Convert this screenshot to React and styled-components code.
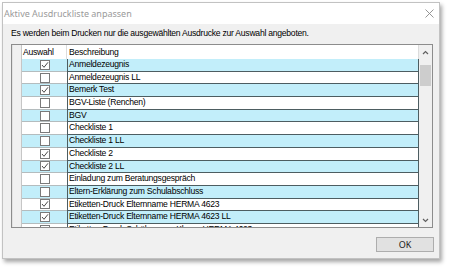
import React from 'react';
import styled, { createGlobalStyle } from 'styled-components';

const Global = createGlobalStyle`
  html, body { margin: 0; padding: 0; background: #ffffff; }
  body { width: 449px; height: 268px; overflow: hidden; }
`;

const Dialog = styled.div`
  margin: 2px 0 0 2px;
  width: 438px;
  height: 257px;
  box-sizing: border-box;
  border: 1px solid #c2c2c2;
  box-shadow: 2px 3px 4px rgba(0, 0, 0, 0.35);
  background: #f0f0f0;
  display: flex;
  flex-direction: column;
`;

const TitleBar = styled.div`
  height: 21px;
  flex: none;
  background: #ffffff;
  display: flex;
  align-items: center;
  justify-content: space-between;
  padding: 0 5px 0 1px;
  font-family: "Noto Sans", sans-serif;
  font-size: 9px;
  color: #9a9a9a;
`;

const Body = styled.div`
  flex: 1;
  display: flex;
  flex-direction: column;
  padding: 4px 5px 0 8px;
  font-family: "Liberation Sans", Arial, sans-serif;
  font-size: 8.6px;
  letter-spacing: -0.25px;
  color: #000;
`;

const Hint = styled.div`
  height: 11px;
  line-height: 11px;
  white-space: nowrap;
`;

const List = styled.div`
  margin-top: 5px;
  width: 422px;
  height: 184px;
  box-sizing: border-box;
  border: 1px solid #8c8c8c;
  background: #ffffff;
  display: flex;
  overflow: hidden;
`;

const Grid = styled.div`
  width: 407px;
  display: flex;
  flex-direction: column;
  overflow: hidden;
`;

const HeaderRow = styled.div`
  height: 14px;
  flex: none;
  display: flex;
  background: #ffffff;
`;

const Row = styled.div`
  height: 12.7px;
  flex: none;
  display: flex;
  background: ${p => (p.$alt ? '#c2eefa' : '#ffffff')};
`;

const Gutter = styled.div`
  width: 10px;
  flex: none;
  box-sizing: border-box;
  background: #f0f0f0;
  border-left: 1px solid #e2e2e2;
  border-right: 1px solid #c6c6c6;
`;

const HeadCell = styled.div`
  width: ${p => p.$w}px;
  flex: none;
  box-sizing: border-box;
  padding-left: ${p => p.$pad}px;
  line-height: 14px;
  border-right: 1px solid #dcdcdc;
  white-space: nowrap;
`;

const CheckCell = styled.div`
  width: 45px;
  flex: none;
  box-sizing: border-box;
  display: flex;
  align-items: center;
  justify-content: center;
  padding-left: 1px;
  border-bottom: 1px solid #b4bcbe;
`;

const DescCell = styled.div`
  width: 352px;
  flex: none;
  box-sizing: border-box;
  border-left: 1px solid #4d5d61;
  border-right: 1px solid #4d5d61;
  border-bottom: 1px solid #4d5d61;
  padding-left: 1px;
  line-height: 11.5px;
  white-space: nowrap;
  overflow: hidden;
`;

const Box = styled.div`
  width: 10px;
  height: 10px;
  box-sizing: border-box;
  border: 1px solid #7a7a7a;
  background: #ffffff;
  display: flex;
  align-items: center;
  justify-content: center;
`;

const Scrollbar = styled.div`
  width: 13px;
  flex: none;
  background: #f0f0f0;
  display: flex;
  flex-direction: column;
`;

const ArrowBtn = styled.div`
  height: 14px;
  flex: none;
  display: flex;
  align-items: center;
  justify-content: center;
`;

const Track = styled.div`
  flex: 1;
  padding: 6px 1px 0 1px;
`;

const Thumb = styled.div`
  height: 21px;
  background: #cdcdcd;
`;

const Footer = styled.div`
  display: flex;
  justify-content: flex-end;
  padding-top: 9px;
`;

const OkButton = styled.button`
  width: 58px;
  height: 15px;
  margin: 0;
  padding: 0;
  box-sizing: border-box;
  border: 1px solid #adadad;
  background: #e1e1e1;
  font-family: "Noto Sans", sans-serif;
  font-size: 9px;
  color: #1a1a1a;
  line-height: 13px;
`;

const rows = [
  ['Anmeldezeugnis', true],
  ['Anmeldezeugnis LL', false],
  ['Bemerk Test', true],
  ['BGV-Liste (Renchen)', false],
  ['BGV', false],
  ['Checkliste 1', false],
  ['Checkliste 1 LL', false],
  ['Checkliste 2', true],
  ['Checkliste 2 LL', true],
  ['Einladung zum Beratungsgespräch', false],
  ['Eltern-Erklärung zum Schulabschluss', false],
  ['Etiketten-Druck Elternname HERMA 4623', true],
  ['Etiketten-Druck Elternname HERMA 4623 LL', true],
  ['Etiketten-Druck Schülername Klasse HERMA 4623', true],
];

const Check = () => (
  <svg width="8" height="8" viewBox="0 0 8 8">
    <polyline points="1,4 3,6.3 7,1.3" fill="none" stroke="#4a4a4a" strokeWidth="1" />
  </svg>
);

const Chevron = ({ down }) => (
  <svg width="7" height="5" viewBox="0 0 7 5">
    <polyline
      points={down ? '1,1 3.5,3.5 6,1' : '1,4 3.5,1.5 6,4'}
      fill="none"
      stroke="#606060"
      strokeWidth="1.2"
    />
  </svg>
);

export default function App() {
  return (
    <>
      <Global />
      <Dialog>
        <TitleBar>
          <span>Aktive Ausdruckliste anpassen</span>
          <svg width="9" height="9" viewBox="0 0 9 9">
            <path d="M0.5 0.5 L8.5 8.5 M8.5 0.5 L0.5 8.5" stroke="#8a8a8a" strokeWidth="0.9" />
          </svg>
        </TitleBar>
        <Body>
          <Hint>Es werden beim Drucken nur die ausgewählten Ausdrucke zur Auswahl angeboten.</Hint>
          <List>
            <Grid>
              <HeaderRow>
                <Gutter />
                <HeadCell $w={45} $pad={1}>Auswahl</HeadCell>
                <HeadCell $w={352} $pad={2}>Beschreibung</HeadCell>
              </HeaderRow>
              {rows.map(([name, checked], i) => (
                <Row key={name} $alt={i % 2 === 0}>
                  <Gutter />
                  <CheckCell>
                    <Box>{checked && <Check />}</Box>
                  </CheckCell>
                  <DescCell>{name}</DescCell>
                </Row>
              ))}
            </Grid>
            <Scrollbar>
              <ArrowBtn><Chevron /></ArrowBtn>
              <Track><Thumb /></Track>
              <ArrowBtn><Chevron down /></ArrowBtn>
            </Scrollbar>
          </List>
          <Footer>
            <OkButton>OK</OkButton>
          </Footer>
        </Body>
      </Dialog>
    </>
  );
}
